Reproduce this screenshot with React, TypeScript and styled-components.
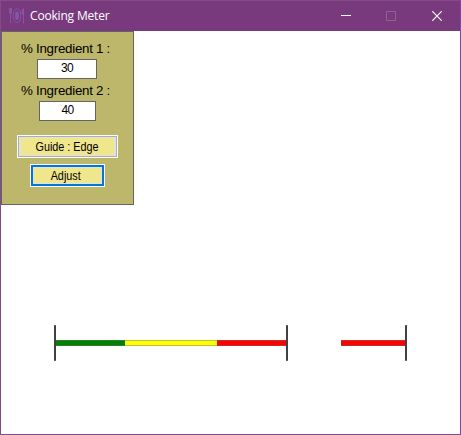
import React from 'react';
import styled, { createGlobalStyle } from 'styled-components';

const GlobalStyle = createGlobalStyle`
  * { box-sizing: border-box; }
  body { margin: 0; background: #fff; }
`;

const Window = styled.main`
  width: 461px;
  height: 435px;
  display: flex;
  flex-direction: column;
  align-items: flex-start;
  border: 1px solid #844b8a;
  background: #fff;
  overflow: hidden;
  font-family: 'Liberation Sans', Arial, sans-serif;
`;

const TitleBar = styled.header`
  width: 100%;
  height: 30px;
  flex: none;
  display: flex;
  align-items: center;
  background: #78397d;
  color: #fff;
  padding-left: 8px;
`;

const Title = styled.h1`
  margin: 0 auto 0 5px;
  font: 400 12px/16px 'Open Sans', 'Noto Sans', sans-serif;
  letter-spacing: -0.18px;
  white-space: nowrap;
`;

const CaptionButton = styled.button<{ $dim?: boolean }>`
  width: 46px;
  height: 30px;
  padding: 0;
  border: 0;
  display: flex;
  align-items: center;
  justify-content: center;
  background: transparent;
  color: ${p => (p.$dim ? '#965f9b' : '#fff')};
`;

const Panel = styled.section`
  width: 133px;
  height: 174px;
  flex: none;
  display: flex;
  flex-direction: column;
  align-items: flex-start;
  padding: 8px 0 0 15px;
  border: 1px solid #646464;
  background: #bdb76b;
`;

const Label = styled.label`
  height: 19px;
  margin-left: 4px;
  font-size: 13.33px;
  line-height: 18px;
  letter-spacing: -0.27px;
  color: #000;
  white-space: pre;
`;

const Field = styled.input<{ $width: number; $left: number }>`
  width: ${p => p.$width}px;
  height: 20px;
  margin: 0 0 3px ${p => p.$left}px;
  padding: 0 0 2px;
  border: 1px solid #646464;
  border-radius: 0;
  outline: 0;
  background: #fff;
  color: #000;
  text-align: center;
  font: 12px/16px 'Liberation Sans', Arial, sans-serif;
  letter-spacing: -0.7px;
`;

const ActionButton = styled.button<{ $width: number; $left: number; $primary?: boolean }>`
  width: ${p => p.$width}px;
  height: 23px;
  margin: ${p => (p.$primary ? 6 : 11)}px 0 0 ${p => p.$left}px;
  padding: ${p => (p.$primary ? 0 : 2)}px;
  display: flex;
  border: 1px solid #fff;
  border-radius: 0;
  background: #e1e1e1;
  box-shadow: inset 0 0 0 ${p => (p.$primary ? '2px #0078d7' : '1px #adadad')};
  color: #000;
  font: 12px/16px 'Liberation Sans', Arial, sans-serif;
`;

const ButtonFace = styled.span<{ $primary?: boolean }>`
  flex: 1;
  align-self: stretch;
  margin: ${p => (p.$primary ? '3px' : '0 1px')};
  padding-right: ${p => (p.$primary ? 3 : 1)}px;
  display: flex;
  align-items: center;
  justify-content: center;
  background: #f0e68c;
  white-space: nowrap;
`;

const Caption = styled.span`
  transform: scaleX(0.9);
`;

const Meters = styled.section`
  display: flex;
  margin: 120px 0 0 53px;
  gap: 53px;
`;

const Meter = styled.div`
  display: flex;
  align-items: center;
  height: 36px;
`;

const Tick = styled.i`
  width: 2px;
  height: 36px;
  background: #414141;
  border: solid #626262;
  border-width: 1px 0;
`;

const Segment = styled.i<{ $width: number; $color: string; $edge: string }>`
  width: ${p => p.$width}px;
  height: 6px;
  background: ${p => p.$color};
  border: solid ${p => p.$edge};
  border-width: 1px 0;
`;

const DiningIcon = () => (
  <svg width="16" height="18" viewBox="0 0 16 18" fill="none" stroke="#8456a8" aria-hidden="true">
    <path d="M.5 1v5.5h2V1M1.5 1v15.5" strokeWidth=".9" />
    <path d="M14.5 16.5V1.5c-1.1.8-1.4 2.2-1.4 5.5h1.4" strokeWidth="1" fill="#8456a8" />
    <ellipse cx="8" cy="8.7" rx="3.9" ry="7" strokeWidth="1" />
    <ellipse cx="8" cy="8.7" rx="2" ry="4.3" fill="#8456a8" stroke="none" />
  </svg>
);

export default function App() {
  return (
    <>
      <GlobalStyle />
      <Window>
        <TitleBar>
          <DiningIcon />
          <Title>Cooking Meter</Title>
          <CaptionButton aria-label="Minimize">
            <svg width="12" height="10" shapeRendering="crispEdges"><path d="M2 4h10v1H2z" fill="currentColor" /></svg>
          </CaptionButton>
          <CaptionButton $dim disabled aria-label="Maximize">
            <svg width="10" height="10"><path d="M.5.5h9v9h-9z" fill="none" stroke="currentColor" /></svg>
          </CaptionButton>
          <CaptionButton aria-label="Close">
            <svg width="10" height="10"><path d="M.3.3l9.4 9.4M9.7.3L.3 9.7" stroke="currentColor" strokeWidth="1.2" /></svg>
          </CaptionButton>
        </TitleBar>
        <Panel>
          <Label>% Ingredient 1 :</Label>
          <Field $width={60} $left={20} defaultValue="30" />
          <Label>% Ingredient 2 :</Label>
          <Field $width={57} $left={22} defaultValue="40" />
          <ActionButton $width={101} $left={0}>
            <ButtonFace><Caption>Guide : Edge</Caption></ButtonFace>
          </ActionButton>
          <ActionButton $primary $width={75} $left={13}>
            <ButtonFace $primary><Caption>Adjust</Caption></ButtonFace>
          </ActionButton>
        </Panel>
        <Meters>
          <Meter>
            <Tick />
            <Segment $width={69} $color="#008000" $edge="#327d32" />
            <Segment $width={92} $color="#ffff00" $edge="#bebe40" />
            <Segment $width={69} $color="#ff0000" $edge="#be3232" />
            <Tick />
          </Meter>
          <Meter>
            <Segment $width={64} $color="#ff0000" $edge="#be3232" />
            <Tick />
          </Meter>
        </Meters>
      </Window>
    </>
  );
}
